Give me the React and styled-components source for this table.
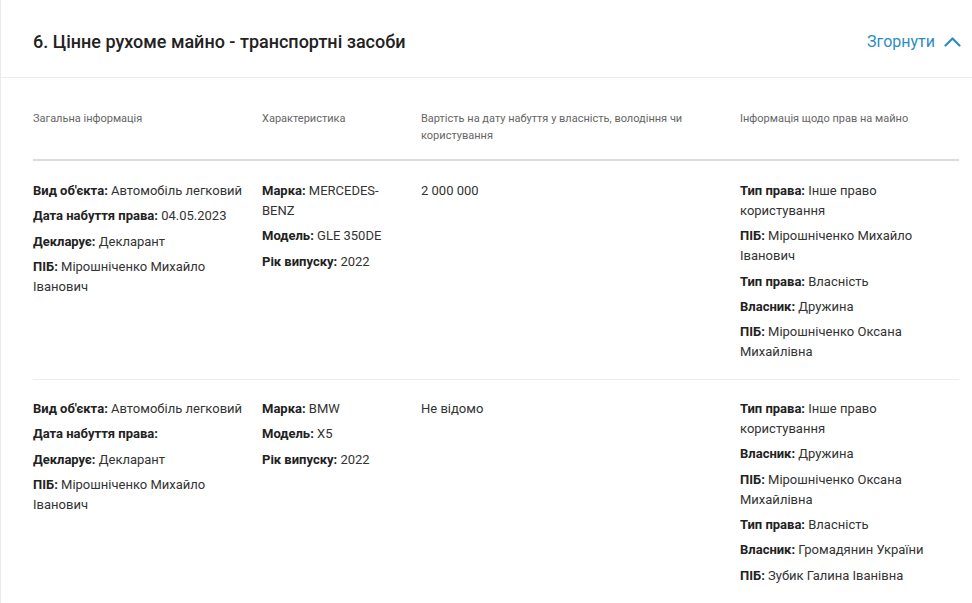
import React from "react"
import styled, { createGlobalStyle } from "styled-components"

const GlobalStyle = createGlobalStyle`
  body {
    margin: 0;
    background: #fff;
    font-family: Roboto, "Noto Sans", sans-serif;
  }
`

const Card = styled.section`
  border-left: 1px solid #ebebeb;
  min-height: 603px;
  background: #fff;
`

const Header = styled.header`
  height: 78px;
  display: flex;
  align-items: center;
  justify-content: space-between;
  padding: 6px 11px 0 32px;
  border-bottom: 1px solid #ececec;
  box-sizing: border-box;
`

const Title = styled.h2`
  margin: 0;
  font-size: 18px;
  font-weight: 500;
  color: #222;
`

const Toggle = styled.button`
  display: flex;
  align-items: center;
  gap: 9px;
  border: 0;
  background: none;
  padding: 0;
  font-family: inherit;
  font-size: 16px;
  color: #2b8dbf;
  cursor: pointer;
`

const Table = styled.div`
  padding: 0 13px 0 32px;
`

const Grid = styled.div`
  display: grid;
  grid-template-columns: 229px 159px 319px 1fr;
`

const HeadRow = styled(Grid)`
  padding: 32px 0 15px;
  border-bottom: 2px solid #dcdcdc;
`

const HeadCell = styled.div`
  font-size: 11px;
  line-height: 17px;
  color: #666;
  padding-right: 20px;
`

const Row = styled(Grid)`
  padding: ${p => (p.first ? "20px 0 17px" : "19px 0 17px")};
  border-bottom: ${p => (p.last ? "none" : "1px solid #ececec")};
`

const Cell = styled.div`
  display: flex;
  flex-direction: column;
  gap: 5.3px;
  padding-right: 12px;
`

const Item = styled.div`
  font-size: 13px;
  line-height: 20px;
  color: #333;

  b {
    font-weight: 700;
    color: #222;
  }
`

const Field = ({ label, value }) => (
  <Item>
    <b>{label}:</b> {value}
  </Item>
)

const rows = [
  {
    general: [
      ["Вид об'єкта", "Автомобіль легковий"],
      ["Дата набуття права", "04.05.2023"],
      ["Декларує", "Декларант"],
      ["ПІБ", "Мірошніченко Михайло Іванович"],
    ],
    specs: [
      ["Марка", "MERCEDES-BENZ"],
      ["Модель", "GLE 350DE"],
      ["Рік випуску", "2022"],
    ],
    cost: "2 000 000",
    rights: [
      ["Тип права", "Інше право користування"],
      ["ПІБ", "Мірошніченко Михайло Іванович"],
      ["Тип права", "Власність"],
      ["Власник", "Дружина"],
      ["ПІБ", "Мірошніченко Оксана Михайлівна"],
    ],
  },
  {
    general: [
      ["Вид об'єкта", "Автомобіль легковий"],
      ["Дата набуття права", ""],
      ["Декларує", "Декларант"],
      ["ПІБ", "Мірошніченко Михайло Іванович"],
    ],
    specs: [
      ["Марка", "BMW"],
      ["Модель", "X5"],
      ["Рік випуску", "2022"],
    ],
    cost: "Не відомо",
    rights: [
      ["Тип права", "Інше право користування"],
      ["Власник", "Дружина"],
      ["ПІБ", "Мірошніченко Оксана Михайлівна"],
      ["Тип права", "Власність"],
      ["Власник", "Громадянин України"],
      ["ПІБ", "Зубик Галина Іванівна"],
    ],
  },
]

const ChevronUp = () => (
  <svg width="17" height="11" viewBox="0 0 17 11" fill="none">
    <polyline
      points="1.5,9.5 8.5,2.5 15.5,9.5"
      stroke="#2b8dbf"
      strokeWidth="2.2"
      strokeLinecap="round"
      strokeLinejoin="round"
    />
  </svg>
)

export default function App() {
  return (
    <Card>
      <GlobalStyle />
      <Header>
        <Title>6. Цінне рухоме майно - транспортні засоби</Title>
        <Toggle>
          Згорнути
          <ChevronUp />
        </Toggle>
      </Header>
      <Table>
        <HeadRow>
          <HeadCell>Загальна інформація</HeadCell>
          <HeadCell>Характеристика</HeadCell>
          <HeadCell>
            Вартість на дату набуття у власність, володіння чи користування
          </HeadCell>
          <HeadCell>Інформація щодо прав на майно</HeadCell>
        </HeadRow>
        {rows.map((row, i) => (
          <Row key={i} first={i === 0} last={i === rows.length - 1}>
            <Cell>
              {row.general.map(([l, v], j) => (
                <Field key={j} label={l} value={v} />
              ))}
            </Cell>
            <Cell>
              {row.specs.map(([l, v], j) => (
                <Field key={j} label={l} value={v} />
              ))}
            </Cell>
            <Cell>
              <Item>{row.cost}</Item>
            </Cell>
            <Cell>
              {row.rights.map(([l, v], j) => (
                <Field key={j} label={l} value={v} />
              ))}
            </Cell>
          </Row>
        ))}
      </Table>
    </Card>
  )
}
